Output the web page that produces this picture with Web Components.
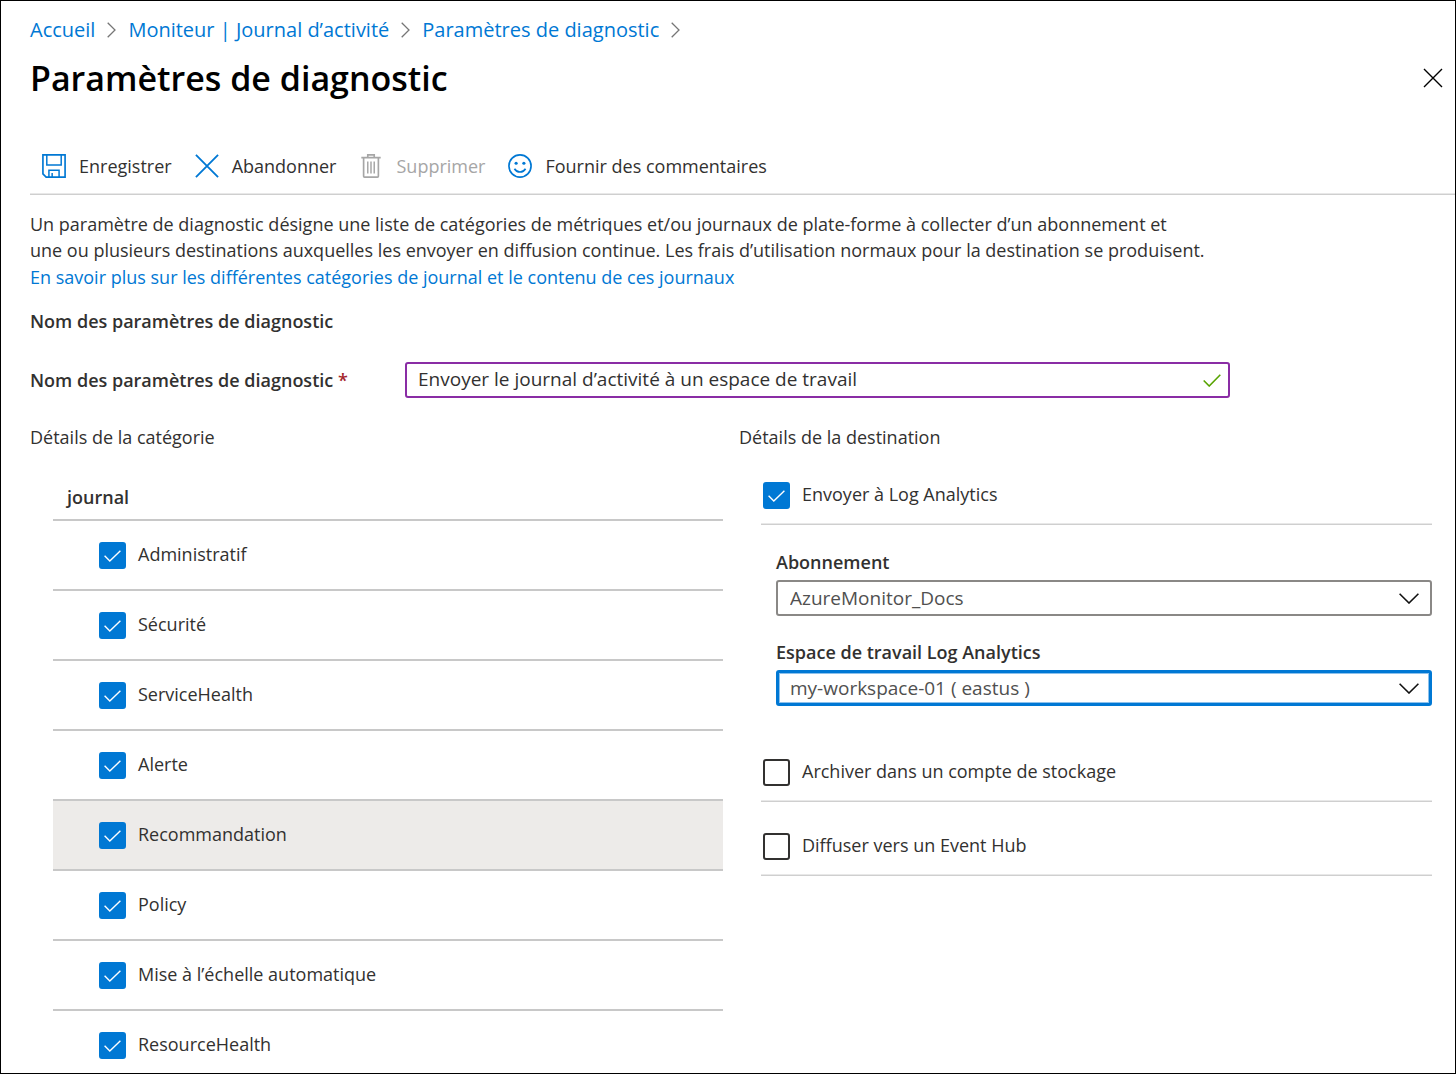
<!DOCTYPE html>
<html lang="fr">
<head>
<meta charset="utf-8">
<meta name="viewport" content="width=device-width, initial-scale=1">
<title>Paramètres de diagnostic</title>
<style>
  body {
    margin: 0;
    background: #fff;
    color: #323130;
    font-family: "Segoe UI", "Open Sans", "Noto Sans", sans-serif;
    font-size: 18px;
    line-height: 26px;
    --accent: #0078d4;
    --valid: #8a2da5;
    --rule: #c8c8c8;
  }
</style>
</head>
<body>
<diagnostic-page></diagnostic-page>

<script>
const define = (name, html, setup) => {
  const template = document.createElement('template');
  template.innerHTML = `<style>*{box-sizing:border-box}</style>${html}`;
  customElements.define(name, class extends HTMLElement {
    connectedCallback() {
      if (this.shadowRoot) return;
      this.attachShadow({ mode: 'open' }).append(template.content.cloneNode(true));
      if (setup) setup(this, this.shadowRoot);
    }
  });
};

define('breadcrumb-item', `
  <style>
    :host { display: flex; align-items: center; }
    a { color: var(--accent); font-size: 20px; line-height: 28px; text-decoration: none; }
    a:hover { text-decoration: underline; }
    svg { width: 9px; height: 16px; margin: 0 12px; fill: none; stroke: #767676; stroke-width: 1.3; }
  </style>
  <a href="#"><slot></slot></a>
  <svg viewBox="0 0 9 16" aria-hidden="true"><path d="M.7.7 8 8 .7 15.300"/></svg>
`);

define('page-header', `
  <style>
    :host { display: block; padding: 15px 12px 0 29px; }
    nav { display: flex; flex-wrap: wrap; }
    .row { display: flex; justify-content: space-between; align-items: center; padding-top: 11px; }
    h1 { margin: 0; color: #000; font-size: 34px; line-height: 46px; font-weight: 600; }
    button { display: flex; padding: 0; border: 0; background: none; cursor: pointer; }
    svg { width: 20px; height: 20px; fill: none; stroke: #000; stroke-width: 1.400; }
  </style>
  <nav aria-label="Fil d’Ariane"><slot name="trail"></slot></nav>
  <div class="row">
    <h1><slot></slot></h1>
    <button type="button" aria-label="Fermer">
      <svg viewBox="0 0 20 20"><path d="M1 1 19 19M19 1 1 19"/></svg>
    </button>
  </div>
`);

const commandIcons = {
  save: '<path d="M1 1H25V25H4.500L1 21.500Z" stroke-width="1.800"/><path d="M5.200 1V12H20.800V1M7.500 25V17.500H18.500V25M11 25V20.500" stroke-width="1.600"/>',
  discard: '<path d="M1 1 25 25M25 1 1 25" stroke-width="2"/>',
  remove: '<path d="M2.500 4H23.500M9.500 4V1H16.500V4M5 4V24Q5 25 6 25H20Q21 25 21 24V4" stroke-width="1.800"/><path d="M9.500 8V21M13 8V21M16.500 8V21" stroke-width="1.600"/>',
  feedback: '<circle cx="13" cy="13" r="12" stroke-width="1.800"/><path d="M7 16Q9 19.500 13 19.500T19 16" stroke-width="1.800"/><circle cx="8.800" cy="10" r="1.700" fill="currentColor" stroke="none"/><circle cx="17.200" cy="10" r="1.700" fill="currentColor" stroke="none"/>'
};
define('command-button', `
  <style>
    :host { display: block; }
    button { display: flex; align-items: center; gap: 13px; padding: 0; border: 0; background: none;
      font: inherit; line-height: 28px; color: inherit; cursor: pointer; }
    button:disabled { color: #a6a6a6; cursor: default; }
    svg { width: 24px; height: 24px; fill: none; stroke: currentColor; color: var(--accent); }
    button:disabled svg { color: #a6a6a6; }
  </style>
  <button type="button"><svg viewBox="0 0 26 26" aria-hidden="true"></svg><span><slot></slot></span></button>
`, (host, root) => {
  root.querySelector('svg').innerHTML = commandIcons[host.getAttribute('icon')];
  root.querySelector('button').disabled = host.hasAttribute('disabled');
});

define('command-bar', `
  <style>
    :host { display: flex; flex-wrap: wrap; gap: 23px; margin-left: 29px; padding: 51px 12px 14px 12px;
      border-bottom: 1px solid #cfcfcf; box-shadow: inset 0 -1px #e8e8e8; }
  </style>
  <slot></slot>
`);

define('intro-text', `
  <style>
    :host { display: block; max-width: 1200px; }
    p { margin: 0; }
    a { display: block; padding-top: 1px; color: var(--accent); text-decoration: none; }
    a:hover { text-decoration: underline; }
  </style>
  <p><slot></slot></p>
  <a href="#"><slot name="link"></slot></a>
`);

define('text-field', `
  <style>
    :host { display: flex; align-items: center; max-width: 1200px; }
    label { flex: 0 0 375px; font-weight: 600; }
    label span { color: #a4262c; }
    .box { flex: 1; display: grid; align-items: center; }
    .box > * { grid-area: 1 / 1; }
    input { width: 100%; height: 36px; padding: 0 44px 2px 11px; border: 2px solid var(--valid);
      border-radius: 3px; outline: 0; background: #fff; color: inherit; font: inherit; font-size: 19px; }
    svg { justify-self: end; width: 18px; height: 13px; margin-right: 9px; fill: none;
      stroke: #57a300; stroke-width: 1.600; pointer-events: none; }
  </style>
  <label for="field"><slot></slot> <span>*</span></label>
  <div class="box">
    <input id="field" type="text" required>
    <svg viewBox="0 0 18 13" aria-hidden="true"><path d="M.7 6.500 6.200 12 17.300.8"/></svg>
  </div>
`, (host, root) => { root.querySelector('input').value = host.getAttribute('value'); });

define('check-field', `
  <style>
    :host { display: block; }
    label { display: flex; align-items: center; gap: 12px; cursor: pointer; }
    .box { display: grid; place-items: center; }
    .box > * { grid-area: 1 / 1; }
    input { appearance: none; width: 27px; height: 27px; margin: 0; border: 2px solid #323130;
      border-radius: 3px; background: #fff; }
    input:checked { border-color: var(--accent); background: var(--accent); }
    svg { width: 17px; height: 12px; fill: none; stroke: #fff; stroke-width: 1.400; pointer-events: none; }
    input:not(:checked) + svg { visibility: hidden; }
    .text { line-height: 24px; padding-bottom: 3px; }
  </style>
  <label>
    <span class="box"><input type="checkbox"><svg viewBox="0 0 17 12" aria-hidden="true"><path d="M.6 5.800 5.800 11 16.400.8"/></svg></span>
    <span class="text"><slot></slot></span>
  </label>
`, (host, root) => { root.querySelector('input').checked = host.hasAttribute('checked'); });

define('category-list', `
  <style>
    :host { display: block; margin-left: 23px; }
    h3 { margin: 0; padding: 0 14px 9px; border-bottom: 2px solid var(--rule); font-size: 18px; line-height: 26px; font-weight: 600; }
    ::slotted(check-field) { padding: 21px 46px 20px; border-bottom: 2px solid var(--rule); }
    ::slotted(check-field[active]) { background: #edebe9; }
    ::slotted(check-field:last-child) { border-bottom: 0; padding-bottom: 14px; }
  </style>
  <h3></h3>
  <slot></slot>
`, (host, root) => { root.querySelector('h3').textContent = host.getAttribute('heading'); });

define('select-field', `
  <style>
    :host { display: block; }
    label { display: block; padding-bottom: 5px; font-weight: 600; }
    .box { display: grid; align-items: center; }
    .box > * { grid-area: 1 / 1; }
    select { appearance: none; width: 100%; height: 36px; padding: 0 44px 0 12px; border: 2px solid #8a8886;
      border-radius: 3px; outline: 0; background: #fff; color: #505050; font: inherit; font-size: 19px; }
    :host([focused]) select { border: 3px solid var(--accent); padding: 0 43px 0 11px; box-shadow: inset 0 0 0 1px #8cc1ec; }
    svg { justify-self: end; width: 20px; height: 11px; margin-right: 13px; fill: none;
      stroke: #111; stroke-width: 1.600; pointer-events: none; }
  </style>
  <label for="choice"><slot></slot></label>
  <div class="box">
    <select id="choice"><option></option></select>
    <svg viewBox="0 0 20 11" aria-hidden="true"><path d="M.6.7 10 10 19.400.7"/></svg>
  </div>
`, (host, root) => { root.querySelector('option').textContent = host.getAttribute('value'); });

define('destination-panel', `
  <style>
    :host { display: block; margin-left: 22px; }
    .section { padding: 0 2px 15px; border-bottom: 1px solid #cfcfcf; box-shadow: inset 0 -1px #e8e8e8; }
    .fields { display: grid; gap: 23px; padding: 24px 0 53px 15px; }
    .section + .section { padding-top: 31px; }
  </style>
  <div class="section"><check-field checked>Envoyer à Log Analytics</check-field></div>
  <div class="fields">
    <select-field value="AzureMonitor_Docs">Abonnement</select-field>
    <select-field value="my-workspace-01 ( eastus )" focused>Espace de travail Log Analytics</select-field>
  </div>
  <div class="section"><check-field>Archiver dans un compte de stockage</check-field></div>
  <div class="section"><check-field>Diffuser vers un Event Hub</check-field></div>
`);

define('diagnostic-page', `
  <style>
    :host { display: block; min-height: 100vh; border: 1px solid #000; box-sizing: border-box; }
    main { padding: 16px 23px 0 29px; }
    h2 { margin: 0; font-size: 18px; line-height: 26px; font-weight: 400; }
    .name { padding: 18px 0 28px; font-weight: 600; }
    .columns { display: grid; grid-template-columns: 1fr 1fr; gap: 16px; padding-top: 26px; }
    category-list { margin-top: 34px; }
    destination-panel { margin-top: 32px; }
  </style>
  <page-header>
    <breadcrumb-item slot="trail">Accueil</breadcrumb-item>
    <breadcrumb-item slot="trail">Moniteur | Journal d’activité</breadcrumb-item>
    <breadcrumb-item slot="trail">Paramètres de diagnostic</breadcrumb-item>
    Paramètres de diagnostic
  </page-header>
  <command-bar>
    <command-button icon="save">Enregistrer</command-button>
    <command-button icon="discard">Abandonner</command-button>
    <command-button icon="remove" disabled>Supprimer</command-button>
    <command-button icon="feedback">Fournir des commentaires</command-button>
  </command-bar>
  <main>
    <intro-text>
      Un paramètre de diagnostic désigne une liste de catégories de métriques et/ou journaux de plate-forme à collecter d’un abonnement et<br>
      une ou plusieurs destinations auxquelles les envoyer en diffusion continue. Les frais d’utilisation normaux pour la destination se produisent.
      <span slot="link">En savoir plus sur les différentes catégories de journal et le contenu de ces journaux</span>
    </intro-text>
    <h2 class="name">Nom des paramètres de diagnostic</h2>
    <text-field value="Envoyer le journal d’activité à un espace de travail">Nom des paramètres de diagnostic</text-field>
    <div class="columns">
      <section>
        <h2>Détails de la catégorie</h2>
        <category-list heading="journal">
          <check-field checked>Administratif</check-field>
          <check-field checked>Sécurité</check-field>
          <check-field checked>ServiceHealth</check-field>
          <check-field checked>Alerte</check-field>
          <check-field checked active>Recommandation</check-field>
          <check-field checked>Policy</check-field>
          <check-field checked>Mise à l’échelle automatique</check-field>
          <check-field checked>ResourceHealth</check-field>
        </category-list>
      </section>
      <section>
        <h2>Détails de la destination</h2>
        <destination-panel></destination-panel>
      </section>
    </div>
  </main>
`);
</script>
</body>
</html>
